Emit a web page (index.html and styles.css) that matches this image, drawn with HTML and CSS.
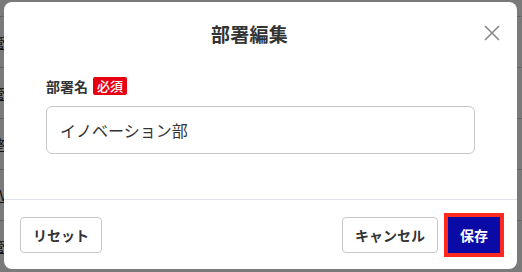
FILE: index.html
```html
<!DOCTYPE html>
<html lang="ja">
<head>
<meta charset="utf-8">
<link rel="stylesheet" href="styles.css">
</head>
<body>
<div class="page">
  <div class="row"><span class="cell">管理</span></div>
  <div class="row"><span class="cell">管理</span></div>
  <div class="row"><span class="cell">整理</span></div>
  <div class="row"><span class="cell">VV</span></div>
  <div class="row"><span class="cell">管理</span></div>
</div>
<div class="overlay"></div>
<div class="modal">
  <div class="header">
    <h1 class="title">部署編集</h1>
    <button class="close" aria-label="閉じる">
      <svg width="16" height="16" viewBox="0 0 16 16"><path d="M1 1L15 15M15 1L1 15" stroke="#8a8a8a" stroke-width="1.6" fill="none"/></svg>
    </button>
  </div>
  <div class="body">
    <div class="label-row">
      <span class="label">部署名</span>
      <span class="badge">必須</span>
    </div>
    <div class="input">イノベーション部</div>
  </div>
  <div class="footer">
    <button class="btn">リセット</button>
    <div class="right">
      <button class="btn">キャンセル</button>
      <button class="btn primary">保存</button>
    </div>
  </div>
</div>
</body>
</html>
```

FILE: styles.css
```css
* { box-sizing: border-box; }
html, body {
  margin: 0;
  padding: 0;
  width: 522px;
  height: 272px;
  overflow: hidden;
  font-family: "Noto Sans CJK JP", "Noto Sans", sans-serif;
  color: #333;
  background: #fff;
}
.page {
  padding-top: 16px;
  height: 272px;
  overflow: hidden;
}
.row {
  height: 51px;
  border-top: 1px dotted #bbb;
  display: flex;
  align-items: center;
}
.cell {
  font-size: 14px;
  margin-left: -9px;
  color: #222;
  text-decoration: underline;
}
.overlay {
  position: absolute;
  inset: 0;
  background: rgba(0, 0, 0, 0.52);
}
.modal {
  position: absolute;
  left: 4px;
  top: 2px;
  width: 513px;
  height: 267px;
  background: #fff;
  border-radius: 8px;
  display: flex;
  flex-direction: column;
}
.header {
  display: flex;
  align-items: center;
  height: 62px;
  padding: 0 15px 0 16px;
}
.title {
  flex: 1;
  margin: 0;
  text-align: center;
  font-size: 19px;
  font-weight: 700;
  color: #333;
  letter-spacing: 0.3px;
  padding-right: 4px;
}
.close {
  width: 18px;
  height: 18px;
  padding: 0;
  border: 0;
  background: none;
  display: flex;
  align-items: center;
  justify-content: center;
  margin-right: 1px;
}
.body {
  padding: 11px 42px 0 42px;
  flex: 1;
}
.label-row {
  display: flex;
  align-items: center;
  gap: 5px;
  height: 22px;
}
.label {
  font-size: 14px;
  font-weight: 700;
  color: #333;
}
.badge {
  background: #e60012;
  color: #fff;
  font-size: 13px;
  font-weight: 500;
  line-height: 18px;
  padding: 0 4px;
  border-radius: 2px;
}
.input {
  margin-top: 9px;
  height: 48px;
  border: 1px solid #c8c8c8;
  border-radius: 6px;
  padding: 0 13px;
  display: flex;
  align-items: center;
  font-size: 16px;
  color: #333;
}
.footer {
  border-top: 1px solid #dde3e8;
  height: 70px;
  padding: 1px 17px 0 16px;
  display: flex;
  align-items: center;
  justify-content: space-between;
}
.right {
  display: flex;
  gap: 10px;
  align-items: center;
}
.btn {
  font-family: inherit;
  height: 36px;
  padding: 0 12px;
  border: 1px solid #c8c8c8;
  border-radius: 4px;
  background: #fff;
  color: #333;
  font-size: 14px;
  font-weight: 700;
}
.btn.primary {
  background: #0a0aa6;
  color: #fff;
  border: 1px solid #0a0aa6;
  border-radius: 0;
  padding: 0 11px;
  outline: 4px solid #ff2a1f;
  outline-offset: 0;
}
```
